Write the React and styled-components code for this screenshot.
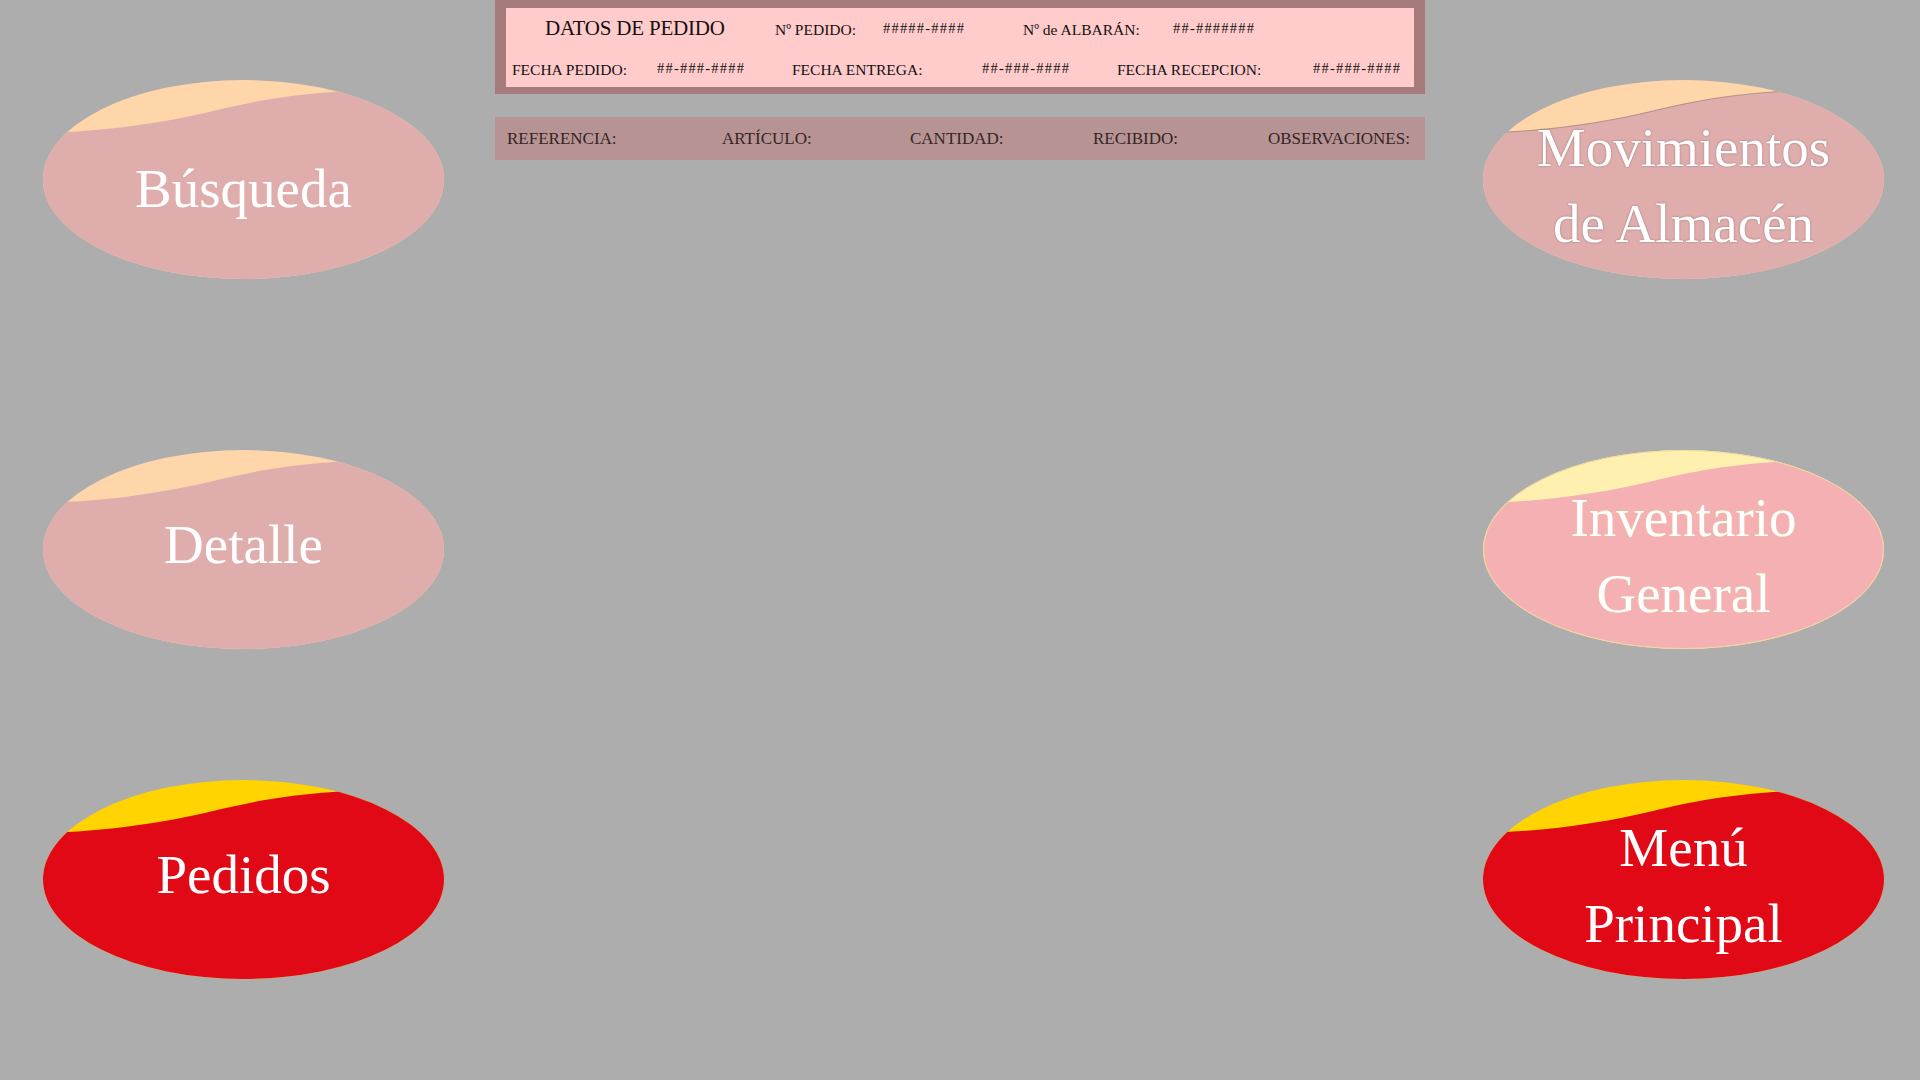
import React from "react";
import styled, { createGlobalStyle } from "styled-components";

const GlobalStyle = createGlobalStyle`
  html, body {
    margin: 0;
    padding: 0;
    background: #adadad;
    font-family: "Liberation Serif", "Times New Roman", serif;
  }
`;

const Page = styled.div`
  display: grid;
  grid-template-columns: 401px 930px 400px;
  column-gap: 51px;
  padding-left: 43px;
  height: 1080px;
  box-sizing: border-box;
`;

const Side = styled.div`
  display: grid;
  grid-template-rows: 370px 330px 199px;
  padding-top: ${(p) => p.$top || 80}px;
  margin-left: ${(p) => p.$shift || 0}px;
`;

const Center = styled.div`
  display: flex;
  flex-direction: column;
  gap: 23px;
`;

/* order data box */
const OrderBox = styled.div`
  background: #a67b7b;
  padding: 8px 11px 7px 11px;
`;

const OrderInner = styled.div`
  background: #ffcbcb;
  height: 79px;
  box-sizing: border-box;
  color: #111;
`;

const Row = styled.div`
  display: grid;
  grid-template-columns: ${(p) => p.$cols};
  padding-left: ${(p) => p.$pad}px;
  align-items: baseline;
  height: ${(p) => p.$h}px;
  line-height: ${(p) => p.$lh}px;
  white-space: nowrap;
`;

const Title = styled.span`
  font-size: 21px;
  letter-spacing: -0.2px;
`;

const Label = styled.span`
  font-size: 15.5px;
`;

const Hash = styled.span`
  font-size: 14.5px;
  letter-spacing: 1.2px;
  position: relative;
  top: -2px;
`;

const FieldBar = styled.div`
  background: #b89393;
  height: 43px;
  display: grid;
  grid-template-columns: 215px 188px 183px 175px auto;
  align-items: center;
  padding-left: 12px;
  color: #332525;
  font-size: 17px;
  white-space: nowrap;
`;

/* menu buttons */
const Button = styled.div`
  display: grid;
  width: 401px;
  height: 199px;
  cursor: pointer;
  & > * {
    grid-area: 1 / 1;
  }
`;

const Shape = styled.svg`
  width: 100%;
  height: 100%;
  display: block;
`;

const Caption = styled.div`
  align-self: start;
  padding-top: ${(p) => p.$top}px;
  text-align: center;
  color: #fff;
  font-size: 55px;
  line-height: 76px;
  text-shadow: ${(p) => p.$shadow || "none"};
`;

const shadows = {
  grey: "0 0 2px rgba(90,70,70,0.6)",
  cream: "0 0 2px rgba(230,210,150,0.9)",
};

let clipSeq = 0;

const MenuButton = ({ main, cap, stroke, edge, top, shadow, children }) => {
  const id = React.useMemo(() => `clip${clipSeq++}`, []);
  return (
    <Button>
      <Shape viewBox="0 0 401 199" preserveAspectRatio="none">
        <defs>
          <clipPath id={id}>
            <ellipse cx="200.5" cy="99.5" rx="200.5" ry="99.5" />
          </clipPath>
        </defs>
        <g clipPath={`url(#${id})`}>
          <rect x="0" y="0" width="401" height="199" fill={cap} />
          <path
            d="M -5,53 C 60,52 120,43 170,31 C 215,20 260,12 330,10 L 406,10 L 406,205 L -5,205 Z"
            fill={main}
            stroke={edge || "none"}
            strokeWidth="1"
          />
        </g>
        {stroke && (
          <ellipse cx="200.5" cy="99.5" rx="200" ry="99" fill="none" stroke={stroke} strokeWidth="1" />
        )}
      </Shape>
      <Caption $top={top} $shadow={shadow}>
        {children}
      </Caption>
    </Button>
  );
};

const App = () => {
  return (
    <>
      <GlobalStyle />
      <Page>
        <Side>
          <MenuButton main="#e0adad" cap="#ffd5aa" top={71}>
            Búsqueda
          </MenuButton>
          <MenuButton main="#e0adad" cap="#ffd5aa" top={57}>
            Detalle
          </MenuButton>
          <MenuButton main="#e10916" cap="#ffd400" top={57}>
            Pedidos
          </MenuButton>
        </Side>

        <Center>
          <OrderBox>
            <OrderInner>
              <Row $cols="230px 108px 140px 150px auto" $pad={39} $h={38} $lh={40}>
                <Title>DATOS DE PEDIDO</Title>
                <Label>Nº PEDIDO:</Label>
                <Hash>#####-####</Hash>
                <Label>Nº de ALBARÁN:</Label>
                <Hash>##-#######</Hash>
              </Row>
              <Row $cols="145px 135px 190px 135px 196px auto" $pad={6} $h={41} $lh={48}>
                <Label>FECHA PEDIDO:</Label>
                <Hash>##-###-####</Hash>
                <Label>FECHA ENTREGA:</Label>
                <Hash>##-###-####</Hash>
                <Label>FECHA RECEPCION:</Label>
                <Hash>##-###-####</Hash>
              </Row>
            </OrderInner>
          </OrderBox>

          <FieldBar>
            <span>REFERENCIA:</span>
            <span>ARTÍCULO:</span>
            <span>CANTIDAD:</span>
            <span>RECIBIDO:</span>
            <span>OBSERVACIONES:</span>
          </FieldBar>
        </Center>

        <Side $top={80} $shift={7}>
          <MenuButton main="#e0adad" cap="#ffd5aa" edge="rgba(120,100,100,0.5)" top={30} shadow={shadows.grey}>
            Movimientos
            <br />
            de Almacén
          </MenuButton>
          <MenuButton main="#f5b0b3" cap="#fff0b0" stroke="#eedc9c" top={30} shadow={shadows.cream}>
            Inventario
            <br />
            General
          </MenuButton>
          <MenuButton main="#e10916" cap="#ffd400" top={30}>
            Menú
            <br />
            Principal
          </MenuButton>
        </Side>
      </Page>
    </>
  );
};

export default App;
